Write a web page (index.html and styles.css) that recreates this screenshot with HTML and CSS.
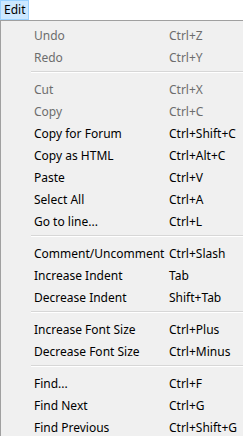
FILE: index.html
```html
<!DOCTYPE html>
<html lang="en">
<head>
    <meta charset="UTF-8">
    <title>Edit menu</title>
    <link rel="stylesheet" href="styles.css">
</head>
<body>
    <div class="menubar">
        <span class="menu-title">Edit</span>
    </div>
    <div class="dropdown">
        <div class="item disabled"><span>Undo</span><span>Ctrl+Z</span></div>
        <div class="item disabled"><span>Redo</span><span>Ctrl+Y</span></div>
        <div class="separator"></div>
        <div class="item disabled"><span>Cut</span><span>Ctrl+X</span></div>
        <div class="item disabled"><span>Copy</span><span>Ctrl+C</span></div>
        <div class="item"><span>Copy for Forum</span><span>Ctrl+Shift+C</span></div>
        <div class="item"><span>Copy as HTML</span><span>Ctrl+Alt+C</span></div>
        <div class="item"><span>Paste</span><span>Ctrl+V</span></div>
        <div class="item"><span>Select All</span><span>Ctrl+A</span></div>
        <div class="item"><span>Go to line...</span><span>Ctrl+L</span></div>
        <div class="separator"></div>
        <div class="item"><span>Comment/Uncomment</span><span>Ctrl+Slash</span></div>
        <div class="item"><span>Increase Indent</span><span>Tab</span></div>
        <div class="item"><span>Decrease Indent</span><span>Shift+Tab</span></div>
        <div class="separator"></div>
        <div class="item"><span>Increase Font Size</span><span>Ctrl+Plus</span></div>
        <div class="item"><span>Decrease Font Size</span><span>Ctrl+Minus</span></div>
        <div class="separator"></div>
        <div class="item"><span>Find...</span><span>Ctrl+F</span></div>
        <div class="item"><span>Find Next</span><span>Ctrl+G</span></div>
        <div class="item"><span>Find Previous</span><span>Ctrl+Shift+G</span></div>
    </div>
</body>
</html>
```

FILE: styles.css
```css
body {
    margin: 0;
    font-family: "Noto Sans", "DejaVu Sans", sans-serif;
    font-size: 12px;
    color: #000;
    background-color: #fff;
    overflow: hidden;
}

.menubar {
    height: 20px;
    display: flex;
}

.menu-title {
    box-sizing: border-box;
    width: 29px;
    height: 20px;
    padding-left: 3px;
    line-height: 18px;
    background-color: #cce8ff;
    border: 1px solid #99d1ff;
}

.dropdown {
    width: 300px;
    border-top: 1px solid #a0a0a0;
    border-left: 1px solid #a0a0a0;
    background-color: #f0f0f0;
    padding-top: 2px;
    height: 600px;
}

.item {
    box-sizing: border-box;
    display: grid;
    grid-template-columns: 135px auto;
    height: 22px;
    padding-top: 4px;
    line-height: 18px;
    padding-left: 33px;
    white-space: nowrap;
}

.item.disabled {
    color: #6d6d6d;
}

.separator {
    box-sizing: border-box;
    height: 10px;
    margin-left: 30px;
    padding-top: 4px;
}

.separator::after {
    content: "";
    display: block;
    height: 1px;
    background-color: #d7d7d7;
    border-bottom: 1px solid #fff;
}
```
